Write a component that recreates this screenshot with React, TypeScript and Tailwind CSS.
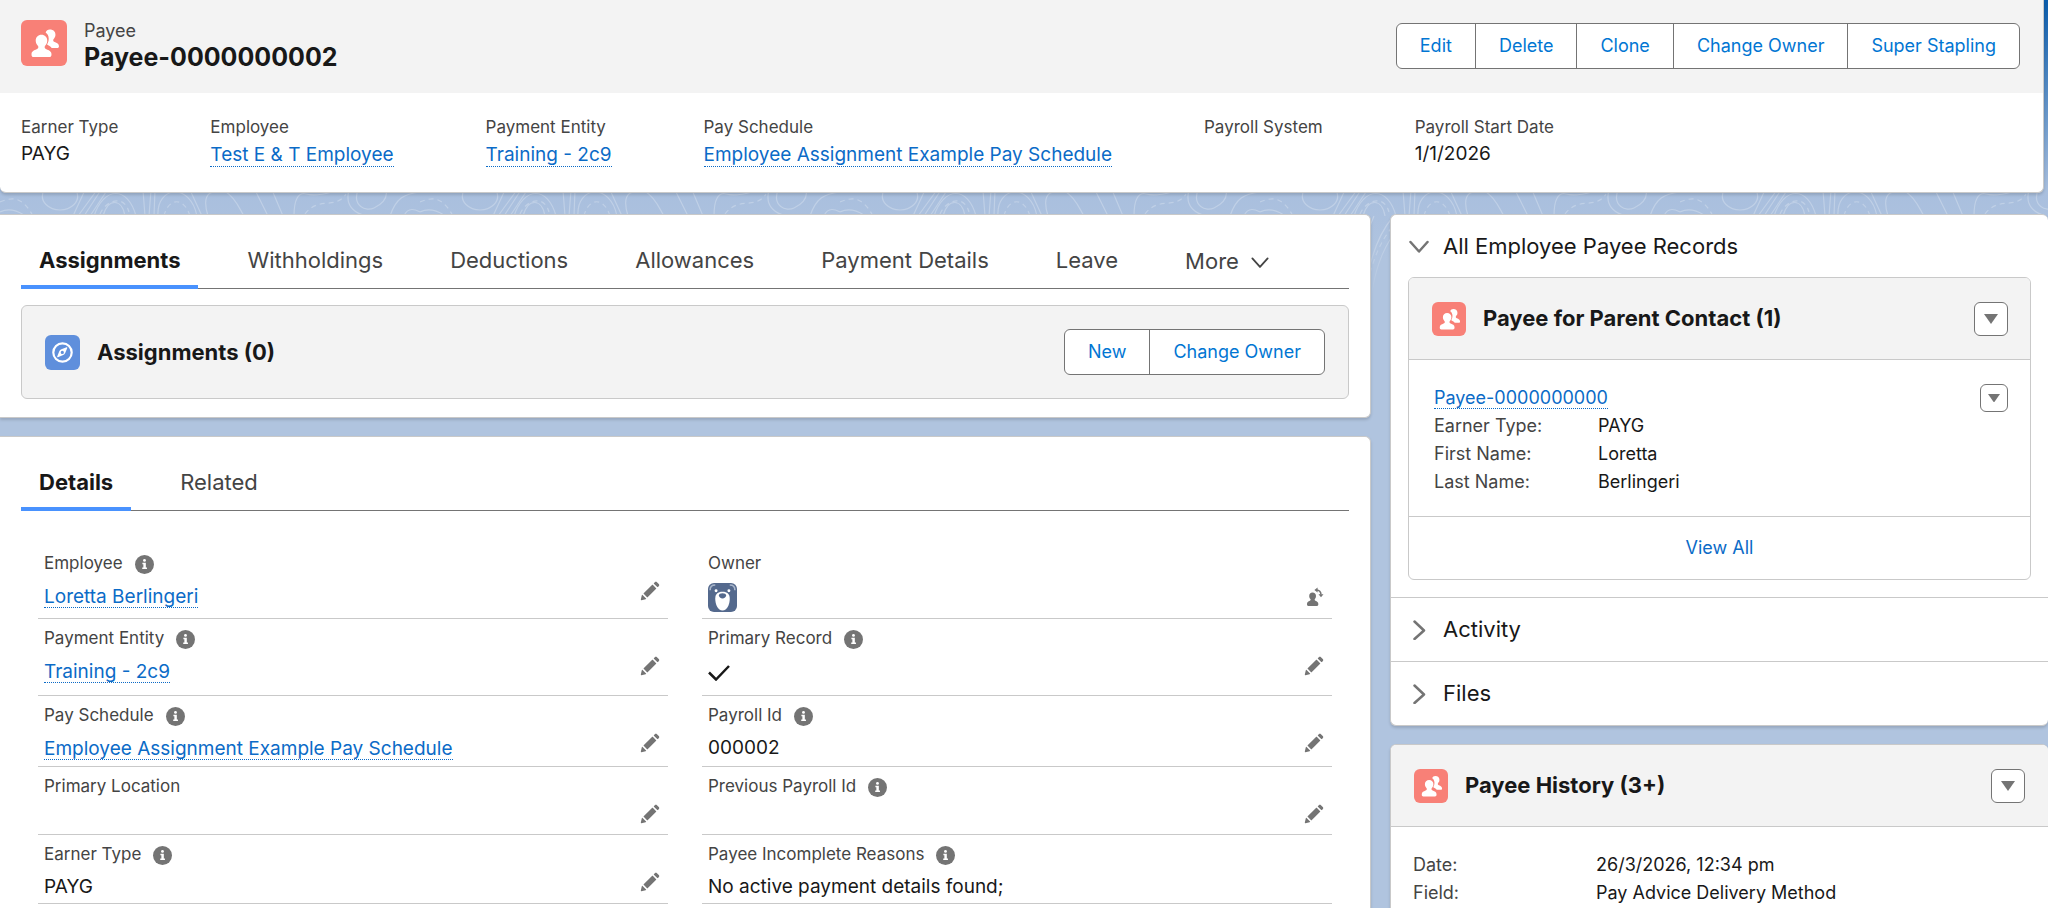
import type { ReactNode } from "react";
import clsx from "clsx";

type Field = {
  label: string;
  info?: boolean;
  value?: string;
  kind?: "link" | "text" | "check" | "owner";
};

const HIGHLIGHTS: Field[] = [
  { label: "Earner Type", value: "PAYG" },
  { label: "Employee", value: "Test E & T Employee", kind: "link" },
  { label: "Payment Entity", value: "Training - 2c9", kind: "link" },
  {
    label: "Pay Schedule",
    value: "Employee Assignment Example Pay Schedule",
    kind: "link",
  },
  { label: "Payroll System" },
  { label: "Payroll Start Date", value: "1/1/2026" },
];

// left / right pairs, one pair per row of the details form
const DETAILS: [Field, Field][] = [
  [
    { label: "Employee", info: true, value: "Loretta Berlingeri", kind: "link" },
    { label: "Owner", kind: "owner" },
  ],
  [
    { label: "Payment Entity", info: true, value: "Training - 2c9", kind: "link" },
    { label: "Primary Record", info: true, kind: "check" },
  ],
  [
    {
      label: "Pay Schedule",
      info: true,
      value: "Employee Assignment Example Pay Schedule",
      kind: "link",
    },
    { label: "Payroll Id", info: true, value: "000002", kind: "text" },
  ],
  [
    { label: "Primary Location" },
    { label: "Previous Payroll Id", info: true },
  ],
  [
    { label: "Earner Type", info: true, value: "PAYG", kind: "text" },
    {
      label: "Payee Incomplete Reasons",
      info: true,
      value: "No active payment details found;",
      kind: "text",
    },
  ],
];

function Contours() {
  return (
    <svg
      className="absolute inset-x-0 top-[190px] h-[110px] w-full"
      aria-hidden
    >
      <defs>
        <pattern id="contours" width="420" height="110" patternUnits="userSpaceOnUse">
          <g fill="none" stroke="#fff" strokeOpacity="0.25" strokeWidth="1.2">
            <path d="M44 0C38 12 50 20 60 20S82 12 76 0M85 0 73 26M97 0 78 26M101 0 84 26M106 2 90 26" />
            <path d="M94 26C104 -4 128 -4 136 26M103 26C108 8 122 8 125 26M143 0 145 26M151 0 149 26M155 0 154 26" />
            <path d="M158 26C156 -4 190 -8 197 26M190 0 202 26M208 26C200 0 214 0 226 2 236 8 240 20 244 26" />
            <path d="M255 0 268 26M272 0 283 26M294 26C294 10 298 2 306 4S330 4 336 0M349 0C344 18 358 24 366 26" />
            <path d="M358 0C352 16 366 22 374 18S388 8 386 0M390 26C396 8 404 4 420 2M0 22C8 18 16 20 24 25M404 26C408 16 416 20 420 22" />
            <path d="M103 110C108 80 114 50 132 28M111 110C114 84 122 60 134 44M103 60C106 44 110 36 114 26" />
            <g strokeDasharray="5 4">
              <path d="M0 12C14 6 22 8 32 24M164 26C168 8 184 6 190 26M305 24C318 6 336 20 346 4M100 24C106 10 124 4 129 22" />
              <path d="M107 100C110 78 118 54 133 36" />
            </g>
          </g>
        </pattern>
        <linearGradient id="contourFade" x1="0" y1="0" x2="0" y2="1">
          <stop offset="0.4" stopColor="#fff" />
          <stop offset="1" stopColor="#000" />
        </linearGradient>
        <mask id="contourMask">
          <rect width="100%" height="100%" fill="url(#contourFade)" />
        </mask>
      </defs>
      <rect width="100%" height="100%" fill="url(#contours)" mask="url(#contourMask)" />
    </svg>
  );
}

function PeopleIcon({ className }: { className: string }) {
  return (
    <span className={clsx("block shrink-0 bg-[#f88077]", className)}>
      <svg viewBox="0 0 45 45" fill="#fff" aria-hidden>
        <path d="M28.2 9.4c-2 0-3.500 1.200-4.100 2.900 2 1.300 3 3.500 3 6.100 0 1.900-.5 3.500-1.400 5.100-.2.400-.1.800.3 1 1.700.8 3.100 1.600 4 3h5.600c.9 0 1.500-.7 1.500-1.500v-.6c0-1.900-2-2.900-4.100-3.800-1.200-.6-1.500-1.100-1.500-1.800s.4-1.300.9-1.800c.8-.9 1.300-2 1.300-3.500 0-3-2-5.100-5.500-5.100z" />
        <path d="M20 14.400c-3.300 0-5.600 2.400-5.600 5.700 0 1.700.5 3.200 1.500 4.300.6.700 1.100 1.300 1.100 2.100 0 .8-.4 1.500-1.700 2.100-2.500 1.100-5 2.200-5 4.600v1c0 1.200.8 2.100 1.900 2.100h15.600c1.100 0 2-.9 2-2.100v-1c0-2.400-2.500-3.500-5-4.600-1.300-.6-1.700-1.300-1.700-2.100 0-.8.500-1.400 1.100-2.100 1-1.100 1.500-2.600 1.500-4.300 0-3.300-2.400-5.700-5.700-5.700z" />
      </svg>
    </span>
  );
}

function CompassIcon() {
  return (
    <span className="block size-[35px] shrink-0 rounded-md bg-[#5f8fdc]">
      <svg viewBox="0 0 35 35" aria-hidden>
        <circle cx="17.500" cy="17.500" r="9.200" fill="none" stroke="#fff" strokeWidth="2.200" />
        <path
          fill="#fff"
          fillRule="evenodd"
          d="M22.300 12.900c.2-.5-.2-.9-.7-.7l-5.200 2.100c-1 .4-1.700 1-2.100 2l-2.100 5.200c-.2.500.2.900.7.700l5.300-2.100c.9-.4 1.600-1.100 2-2zM17.300 15.800a1.600 1.600 0 1 1 0 3.200 1.600 1.600 0 0 1 0-3.200z"
        />
      </svg>
    </span>
  );
}

function InfoIcon() {
  return (
    <svg viewBox="0 0 20 20" className="size-[19px]" aria-hidden>
      <circle cx="10" cy="10" r="10" fill="#747474" />
      <circle cx="10" cy="5.700" r="1.500" fill="#fff" />
      <path d="M7.800 8.200h3.600v5h1.200v1.500H7.600v-1.500h1.200V9.700h-1z" fill="#fff" />
    </svg>
  );
}

function PencilIcon() {
  return (
    <svg viewBox="0 0 52 52" className="size-5" fill="#747474" aria-hidden>
      <path d="M9.500 33.400l8.900 8.900c.4.400 1 .4 1.400 0L42 20c.4-.4.4-1 0-1.400l-8.800-8.800c-.4-.4-1-.4-1.400 0L9.500 32.100c-.4.4-.4 1 0 1.300zM36.100 5.700c-.4.4-.4 1 0 1.400l8.800 8.800c.4.4 1 .4 1.400 0l2.500-2.500c1.600-1.500 1.600-3.900 0-5.500l-4.700-4.700c-1.600-1.600-4.100-1.600-5.700 0l-2.300 2.500zM2.100 48.200c-.2 1 .7 1.900 1.700 1.700l10.900-2.600c.4-.1.700-.3.900-.5l.2-.2c.2-.2.3-.9-.1-1.300l-9-9c-.4-.4-1.100-.3-1.300-.1l-.2.2c-.3.3-.4.600-.5.9L2.100 48.200z" />
    </svg>
  );
}

function ChangeOwnerIcon() {
  return (
    <svg viewBox="0 0 18 20" className="h-5 w-[18px]" aria-hidden>
      <path
        fill="#747474"
        d="M6.500 5.500c-2 0-3.300 1.400-3.300 3.400 0 1.300.5 2.300 1.200 3.100.5.600.3 1.300-.5 1.700-1.700.8-2.900 1.300-2.900 3v.9c0 .8.500 1.300 1.200 1.300h8.900c.7 0 1.200-.5 1.200-1.300v-.9c0-1.700-1.200-2.200-2.900-3-.8-.4-1-1.100-.5-1.700.7-.8 1.100-1.800 1.100-3.100 0-2-1.400-3.400-3.500-3.400z"
      />
      <path fill="none" stroke="#747474" strokeWidth="1.500" d="M10.500 3c2.700.2 4.300 1.600 4.500 4.600" />
      <path fill="#747474" d="M11.600.4v5L8.400 2.900zM12.500 7.200h5L15 10.200z" />
    </svg>
  );
}

function OwnerAvatar() {
  return (
    <svg viewBox="0 0 28 28" className="size-[29px] rounded-md" aria-hidden>
      <rect width="28" height="28" fill="#54698d" />
      <path d="M2 7C2 4 4 2 7 2M26 7c0-3-2-5-5-5" fill="none" stroke="#a9b6cb" strokeWidth="1.500" />
      <circle cx="7.800" cy="7.500" r="1.400" fill="#fff" />
      <circle cx="20.200" cy="7.500" r="1.400" fill="#fff" />
      <path d="M14 8.500c4.600 0 7 2.300 7 6.500 0 6-2.600 11.500-7 11.500S7 21 7 15c0-4.200 2.400-6.500 7-6.500z" fill="#fff" />
      <path d="M14 10c2 0 3.500.8 3.500 2.100S15.800 15 14 15s-3.500-1.600-3.500-2.900S12 10 14 10z" fill="#54698d" />
    </svg>
  );
}

function Chevron({ open, className }: { open?: boolean; className: string }) {
  return (
    <svg
      viewBox="0 0 20 20"
      className={className}
      fill="none"
      stroke="currentColor"
      strokeLinecap="round"
      strokeLinejoin="round"
      aria-hidden
    >
      <path d={open ? "M1.500 6 10 15.500 18.500 6" : "M5.500 1.500 15 10.500 5.500 19"} />
    </svg>
  );
}

function TextLink({ children }: { children: ReactNode }) {
  return (
    <a
      href="#"
      className="border-b border-dotted border-[#0b6bc7] leading-5 text-[#0b6bc7]"
    >
      {children}
    </a>
  );
}

function ButtonGroup({ labels }: { labels: string[] }) {
  return (
    <div className="flex shrink-0 divide-x divide-[#747474] overflow-hidden rounded-md border border-[#747474] bg-white">
      {labels.map((label) => (
        <button
          key={label}
          type="button"
          className="h-11 px-[23px] text-lg text-[#0176d3]"
        >
          {label}
        </button>
      ))}
    </div>
  );
}

function MenuButton({ label, small }: { label: string; small?: boolean }) {
  return (
    <button
      type="button"
      aria-label={label}
      className={clsx(
        "grid shrink-0 place-items-center rounded-md border border-[#747474] bg-white",
        small ? "size-7" : "size-[34px]",
      )}
    >
      <svg viewBox="0 0 14 10" className={small ? "w-3" : "w-3.5"} aria-hidden>
        <path d="M0 0h14L7 10z" fill="#747474" />
      </svg>
    </button>
  );
}

function Tabs({ items, more }: { items: string[]; more?: boolean }) {
  return (
    <div
      role="tablist"
      className="flex h-[54px] gap-[31px] border-b border-[#747474] text-[22px] text-[#444]"
    >
      {items.map((item, i) => (
        <button
          key={item}
          type="button"
          role="tab"
          aria-selected={i === 0}
          className={clsx(
            "-mb-px border-b-4 px-[18px] whitespace-nowrap",
            i === 0
              ? "border-[#4992fe] font-bold text-[#181818]"
              : "border-transparent",
          )}
        >
          {item}
        </button>
      ))}
      {more && (
        <button type="button" className="flex items-center gap-3 px-[18px]">
          More
          <Chevron open className="size-[18px] stroke-2" />
        </button>
      )}
    </div>
  );
}

function FieldValue({ field }: { field: Field }) {
  switch (field.kind) {
    case "link":
      return (
        <span className="flex h-[38px] items-center pt-1">
          <TextLink>{field.value}</TextLink>
        </span>
      );
    case "text":
      return <span className="flex h-9 items-center pt-1">{field.value}</span>;
    case "check":
      return (
        <span className="flex h-11 items-center">
          <svg
            viewBox="0 0 22 16"
            className="w-[22px]"
            fill="none"
            stroke="#181818"
            strokeWidth="2.500"
            role="img"
            aria-label="True"
          >
            <path d="M1 7.500 8 14.500 21 1" />
          </svg>
        </span>
      );
    case "owner":
      return (
        <span className="flex h-[42px] items-center">
          <OwnerAvatar />
        </span>
      );
    default:
      return <span className="h-[35px]" />;
  }
}

function DetailField({ field }: { field: Field }) {
  const owner = field.kind === "owner";
  return (
    <div className="border-b border-[#c9c9c9] pt-2 pr-2 pl-1.5">
      <div className="flex h-6 items-center gap-3 text-[17px] text-[#444]">
        {field.label}
        {field.info && <InfoIcon />}
      </div>
      <div className="flex items-start justify-between text-[19px] text-[#181818]">
        <FieldValue field={field} />
        {field.label !== "Payee Incomplete Reasons" && (
          <button
            type="button"
            aria-label={owner ? "Change Owner" : `Edit ${field.label}`}
            className={clsx(
              "flex h-[22px] items-center",
              owner ? "mt-2.5" : "mt-1",
            )}
          >
            {owner ? <ChangeOwnerIcon /> : <PencilIcon />}
          </button>
        )}
      </div>
    </div>
  );
}

function PairList({ rows, labelClass }: { rows: [string, string][]; labelClass: string }) {
  return (
    <dl>
      {rows.map(([label, value]) => (
        <div key={label} className="flex h-7 items-center text-lg">
          <dt className={clsx("shrink-0 text-[#444]", labelClass)}>{label}</dt>
          <dd className="text-[#181818]">{value}</dd>
        </div>
      ))}
    </dl>
  );
}

function ListHeader({ title, className }: { title: string; className: string }) {
  return (
    <header
      className={clsx(
        "flex h-[82px] items-center border-b border-[#c9c9c9] bg-[#f3f3f3] pl-[23px]",
        className,
      )}
    >
      <PeopleIcon className="size-[34px] rounded-md" />
      <h2 className="ml-[17px] flex-1 text-[22px] font-bold">{title}</h2>
      <MenuButton label={`${title} actions`} />
    </header>
  );
}

const CARD = "border border-[#c9c9c9] bg-white shadow-[0_2px_3px_rgba(0,0,0,0.15)]";

export default function App() {
  return (
    <div className="relative isolate flex min-h-screen flex-col overflow-hidden bg-[#b0c4df] bg-[linear-gradient(to_bottom,#0b5cab_0,#a9bfde_192px,#b0c4df_260px)] font-[Inter,'Liberation_Sans',sans-serif] text-[#181818]">
      <div className="absolute inset-0 -z-10">
        <Contours />
      </div>

      <section className="mr-1 overflow-hidden rounded-b-md border-r border-b border-[#c9c9c9] bg-white shadow-[0_2px_3px_rgba(0,0,0,0.15)]">
        <div className="flex h-[93px] items-start bg-[#f3f3f3] pt-5 pr-[23px] pl-[21px]">
          <PeopleIcon className="size-[46px] rounded-md" />
          <div className="ml-[17px] flex-1">
            <p className="text-lg leading-[22px] text-[#444]">Payee</p>
            <h1 className="text-[25px] leading-[30px] font-bold">Payee-0000000002</h1>
          </div>
          <div className="pt-[3px]">
            <ButtonGroup
              labels={["Edit", "Delete", "Clone", "Change Owner", "Super Stapling"]}
            />
          </div>
        </div>
        <dl className="flex h-[99px] gap-[92px] pt-[22px] pl-[21px] whitespace-nowrap">
          {HIGHLIGHTS.map((f) => (
            <div key={f.label}>
              <dt className="text-[17px] leading-6 text-[#444]">{f.label}</dt>
              <dd className={clsx("text-[19px]", f.kind === "link" ? "leading-8" : "leading-[30px]")}>
                {f.kind === "link" ? <TextLink>{f.value}</TextLink> : f.value}
              </dd>
            </div>
          ))}
        </dl>
      </section>

      <main className="mt-[21px] grid flex-1 grid-cols-[minmax(0,1371fr)_minmax(0,658fr)] gap-[19px]">
        <div className="flex flex-col gap-[18px]">
          <section className={clsx(CARD, "rounded-r-md border-l-0 px-[21px] pt-5 pb-[18px]")}>
            <Tabs
              more
              items={[
                "Assignments",
                "Withholdings",
                "Deductions",
                "Allowances",
                "Payment Details",
                "Leave",
              ]}
            />
            <div className="mt-4 flex h-[94px] items-center rounded-md border border-[#c9c9c9] bg-[#f3f3f3] px-[23px]">
              <CompassIcon />
              <h2 className="ml-[17px] flex-1 text-[22px] font-bold">Assignments (0)</h2>
              <ButtonGroup labels={["New", "Change Owner"]} />
            </div>
          </section>

          <section className={clsx(CARD, "flex-1 rounded-tr-md border-b-0 border-l-0 px-[21px] pt-5")}>
            <Tabs items={["Details", "Related"]} />
            <div className="mt-[33px] grid grid-cols-2 gap-x-[34px] px-[17px]">
              {DETAILS.flat().map((field, i) => (
                <DetailField key={i} field={field} />
              ))}
            </div>
          </section>
        </div>

        <aside className="flex flex-col gap-[18px]">
          <section className={clsx(CARD, "rounded-md border-r-0")}>
            <button
              type="button"
              className="flex h-[62px] w-full items-center gap-3.5 pl-[18px] text-[22px]"
            >
              <Chevron open className="size-5 stroke-[2.5] text-[#747474]" />
              All Employee Payee Records
            </button>
            <div className="mx-[17px] mb-[17px] overflow-hidden rounded-md border border-[#c9c9c9]">
              <ListHeader title="Payee for Parent Contact (1)" className="pr-[22px]" />
              <div className="flex items-start justify-between pt-6 pr-[22px] pb-5 pl-[25px]">
                <div>
                  <p className="h-7 text-lg leading-7">
                    <TextLink>Payee-0000000000</TextLink>
                  </p>
                  <PairList
                    labelClass="w-[164px]"
                    rows={[
                      ["Earner Type:", "PAYG"],
                      ["First Name:", "Loretta"],
                      ["Last Name:", "Berlingeri"],
                    ]}
                  />
                </div>
                <MenuButton small label="Payee-0000000000 actions" />
              </div>
              <a
                href="#"
                className="flex h-[63px] items-center justify-center border-t border-[#c9c9c9] text-lg text-[#0b6bc7]"
              >
                View All
              </a>
            </div>
            {["Activity", "Files"].map((title) => (
              <button
                key={title}
                type="button"
                className="flex h-16 w-full items-center gap-3.5 border-t border-[#c9c9c9] pl-[18px] text-[22px]"
              >
                <Chevron className="size-5 stroke-[2.5] text-[#747474]" />
                {title}
              </button>
            ))}
          </section>

          <section className={clsx(CARD, "flex-1 overflow-hidden rounded-t-md border-r-0 border-b-0")}>
            <ListHeader title="Payee History (3+)" className="pr-[23px]" />
            <div className="pt-6 pl-[22px]">
              <PairList
                labelClass="w-[183px]"
                rows={[
                  ["Date:", "26/3/2026, 12:34 pm"],
                  ["Field:", "Pay Advice Delivery Method"],
                ]}
              />
            </div>
          </section>
        </aside>
      </main>
    </div>
  );
}
